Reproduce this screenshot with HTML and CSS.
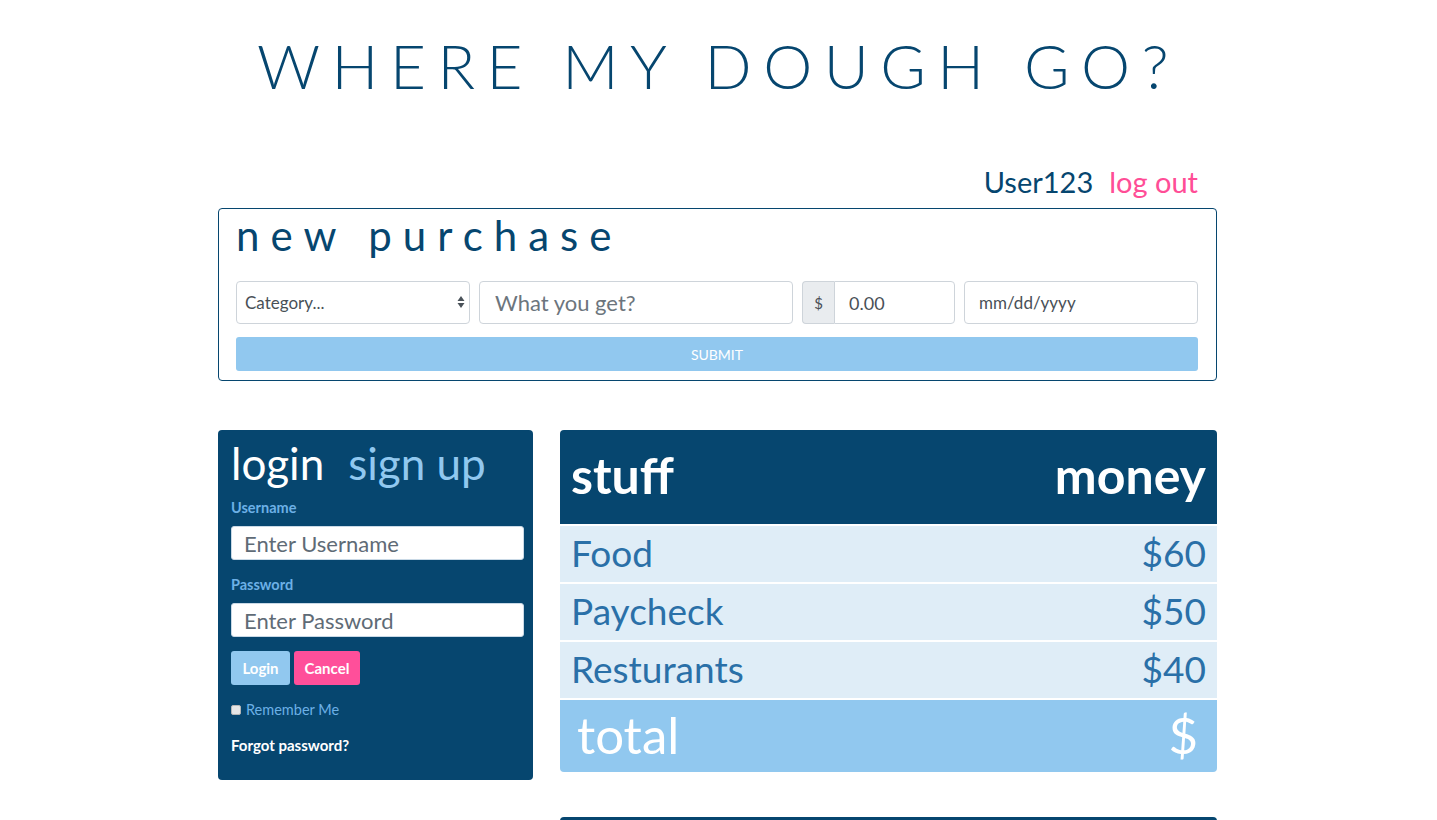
FILE: index.html
```html
<!DOCTYPE html>
<html lang="en">
<head>
<meta charset="utf-8">
<title>Where My Dough Go?</title>
<link rel="stylesheet" href="styles.css">
</head>
<body>
<header class="site-header">
  <h1 class="site-title">WHERE MY DOUGH GO?</h1>
</header>
<main class="container">
  <div class="user-bar">
    <span class="user-name">User123</span>
    <a class="logout" href="#">log out</a>
  </div>

  <section class="purchase-card">
    <h2 class="purchase-title">new purchase</h2>
    <form class="purchase-form">
      <div class="purchase-row">
        <div class="select-wrap">
          <select class="field field-select">
            <option>Category...</option>
          </select>
          <svg class="select-arrows" width="8" height="14" viewBox="0 0 8 14"><path d="M4 1 L7.5 6 H0.5 Z M4 13 L7.5 8 H0.5 Z" fill="#4a5259"/></svg>
        </div>
        <input class="field field-big" type="text" placeholder="What you get?">
        <div class="money-group">
          <span class="money-addon">$</span>
          <input class="field field-money" type="text" placeholder="0.00">
        </div>
        <input class="field field-date" type="text" placeholder="mm/dd/yyyy">
      </div>
      <button class="submit-btn" type="button">SUBMIT</button>
    </form>
  </section>

  <div class="lower">
    <aside class="login-card">
      <div class="login-tabs">
        <span class="tab tab-active">login</span>
        <span class="tab tab-alt">sign up</span>
      </div>
      <label class="login-label">Username</label>
      <input class="login-input" type="text" placeholder="Enter Username">
      <label class="login-label">Password</label>
      <input class="login-input" type="password" placeholder="Enter Password">
      <div class="login-buttons">
        <button class="btn btn-login" type="button">Login</button>
        <button class="btn btn-cancel" type="button">Cancel</button>
      </div>
      <label class="remember"><span class="checkbox"></span>Remember Me</label>
      <a class="forgot" href="#">Forgot password?</a>
    </aside>

    <div class="right-col">
      <div class="summary">
        <div class="summary-head">
          <span>stuff</span>
          <span>money</span>
        </div>
        <div class="summary-row"><span>Food</span><span>$60</span></div>
        <div class="summary-row"><span>Paycheck</span><span>$50</span></div>
        <div class="summary-row"><span>Resturants</span><span>$40</span></div>
        <div class="summary-total"><span>total</span><span>$</span></div>
      </div>
      <div class="next-card"></div>
    </div>
  </div>
</main>
</body>
</html>
```

FILE: styles.css
```css
* { box-sizing: border-box; }

body {
  margin: 0;
  font-family: "Lato", "Noto Sans", sans-serif;
  color: #06466f;
  background: #fff;
  overflow: hidden;
}

.site-header {
  padding-top: 25px;
  text-align: center;
}

.site-title {
  margin: 0;
  font-weight: 300;
  font-size: 62px;
  line-height: 80px;
  letter-spacing: 11.5px;
  color: #06466f;
}

.container {
  width: 1001px;
  padding-right: 2px;
  margin: 0 auto;
}

.user-bar {
  margin-top: 60px;
  display: flex;
  justify-content: flex-end;
  gap: 16px;
  padding-right: 19px;
  font-size: 29px;
  line-height: 34px;
}

.user-name { color: #06466f; }
.logout { color: #ff4d96; text-decoration: none; }

.purchase-card {
  margin-top: 9px;
  border: 1px solid #06466f;
  border-radius: 4px;
  padding: 1px 18px 9px 17px;
}

.purchase-title {
  margin: 0;
  font-weight: 400;
  font-size: 42px;
  line-height: 50px;
  letter-spacing: 11px;
  color: #06466f;
}

.purchase-form { margin-top: 21px; }

.purchase-row {
  display: grid;
  grid-template-columns: 234px 314px 153px 234px;
  gap: 9px;
}

.field {
  height: 43px;
  border: 1px solid #ced4da;
  border-radius: 4px;
  background: #fff;
  font-family: inherit;
  font-size: 17px;
  color: #495057;
  padding: 0 12px;
  width: 100%;
}

.field::placeholder { color: #6c757d; }
.field-big { font-size: 22px; padding: 0 15px; }
.field-date::placeholder, .field-money::placeholder { color: #495057; }
.field-date { padding: 0 14px; }
.field-money { font-size: 18px; }

.select-wrap { position: relative; }
.field-select {
  appearance: none;
  -webkit-appearance: none;
  padding: 0 8px;
  color: #495057;
}
.select-arrows {
  position: absolute;
  right: 5px;
  top: 14px;
}

.money-group { display: flex; }
.money-addon {
  width: 32px;
  height: 43px;
  display: flex;
  align-items: center;
  justify-content: center;
  background: #e9ecef;
  border: 1px solid #ced4da;
  border-right: none;
  border-radius: 4px 0 0 4px;
  font-size: 15px;
  color: #495057;
}
.field-money {
  border-radius: 0 4px 4px 0;
  flex: 1;
  padding: 0 14px;
}

.submit-btn {
  display: block;
  width: 100%;
  margin-top: 13px;
  height: 34px;
  border: none;
  border-radius: 3px;
  background: #91c8ef;
  color: #fff;
  font-family: inherit;
  font-size: 14px;
}

.lower {
  margin-top: 49px;
  display: grid;
  grid-template-columns: 315px 657px;
  gap: 27px;
  align-items: start;
}

.login-card {
  background: #06466f;
  border-radius: 4px;
  padding: 6px 9px 27px 13px;
  display: flex;
  flex-direction: column;
  align-items: flex-start;
}

.login-tabs {
  display: flex;
  gap: 24px;
  font-size: 44px;
  line-height: 54px;
}
.tab-active { color: #fff; }
.tab-alt { color: #91c8ef; }

.login-label {
  font-size: 14.5px;
  font-weight: 700;
  color: #6cb0e6;
  line-height: 20px;
}
.login-label + .login-input { margin-top: 8px; }
.login-tabs + .login-label { margin-top: 8px; }
.login-input + .login-label { margin-top: 15px; }

.login-input {
  width: 100%;
  height: 34px;
  border: 1px solid #c9d9e6;
  border-radius: 3px;
  background: #fff;
  font-family: inherit;
  font-size: 22px;
  padding: 0 12px;
  color: #495057;
}
.login-input::placeholder { color: #5f6b76; }

.login-buttons {
  margin-top: 14px;
  display: flex;
  gap: 4px;
}
.btn {
  height: 34px;
  border: none;
  border-radius: 3px;
  font-family: inherit;
  font-size: 15px;
  font-weight: 700;
  color: #fff;
  padding: 0;
}
.btn-login { background: #91c8ef; width: 59px; }
.btn-cancel { background: #ff4f9a; width: 66px; }

.remember {
  margin-top: 17px;
  display: flex;
  align-items: center;
  gap: 5px;
  font-size: 14.5px;
  color: #6cb0e6;
  line-height: 16px;
}
.checkbox {
  width: 10px;
  height: 10px;
  background: #e6e6e6;
  border: 1px solid #b5b5b5;
  border-radius: 2px;
}

.forgot {
  margin-top: 19px;
  font-size: 15px;
  font-weight: 700;
  color: #fff;
  text-decoration: none;
  line-height: 16px;
}

.right-col {
  display: flex;
  flex-direction: column;
  gap: 45px;
}

.summary {
  display: flex;
  flex-direction: column;
  gap: 2px;
  border-radius: 4px;
  overflow: hidden;
}

.summary-head,
.summary-row,
.summary-total {
  display: flex;
  justify-content: space-between;
  align-items: center;
}

.summary-head {
  height: 94px;
  background: #06466f;
  color: #fff;
  font-size: 50px;
  font-weight: 700;
  padding: 0 11px 4px 11px;
}

.summary-row {
  height: 56px;
  background: #dfedf7;
  color: #2a70a8;
  font-size: 37px;
  padding: 0 11px 4px;
}
.summary-row:first-of-type { height: 57px; }

.summary-total {
  height: 72px;
  background: #91c8ef;
  color: #fff;
  font-size: 51px;
  padding: 0 19px 3px 17px;
}

.next-card {
  height: 20px;
  background: #06466f;
  border-radius: 4px 4px 0 0;
}
```
